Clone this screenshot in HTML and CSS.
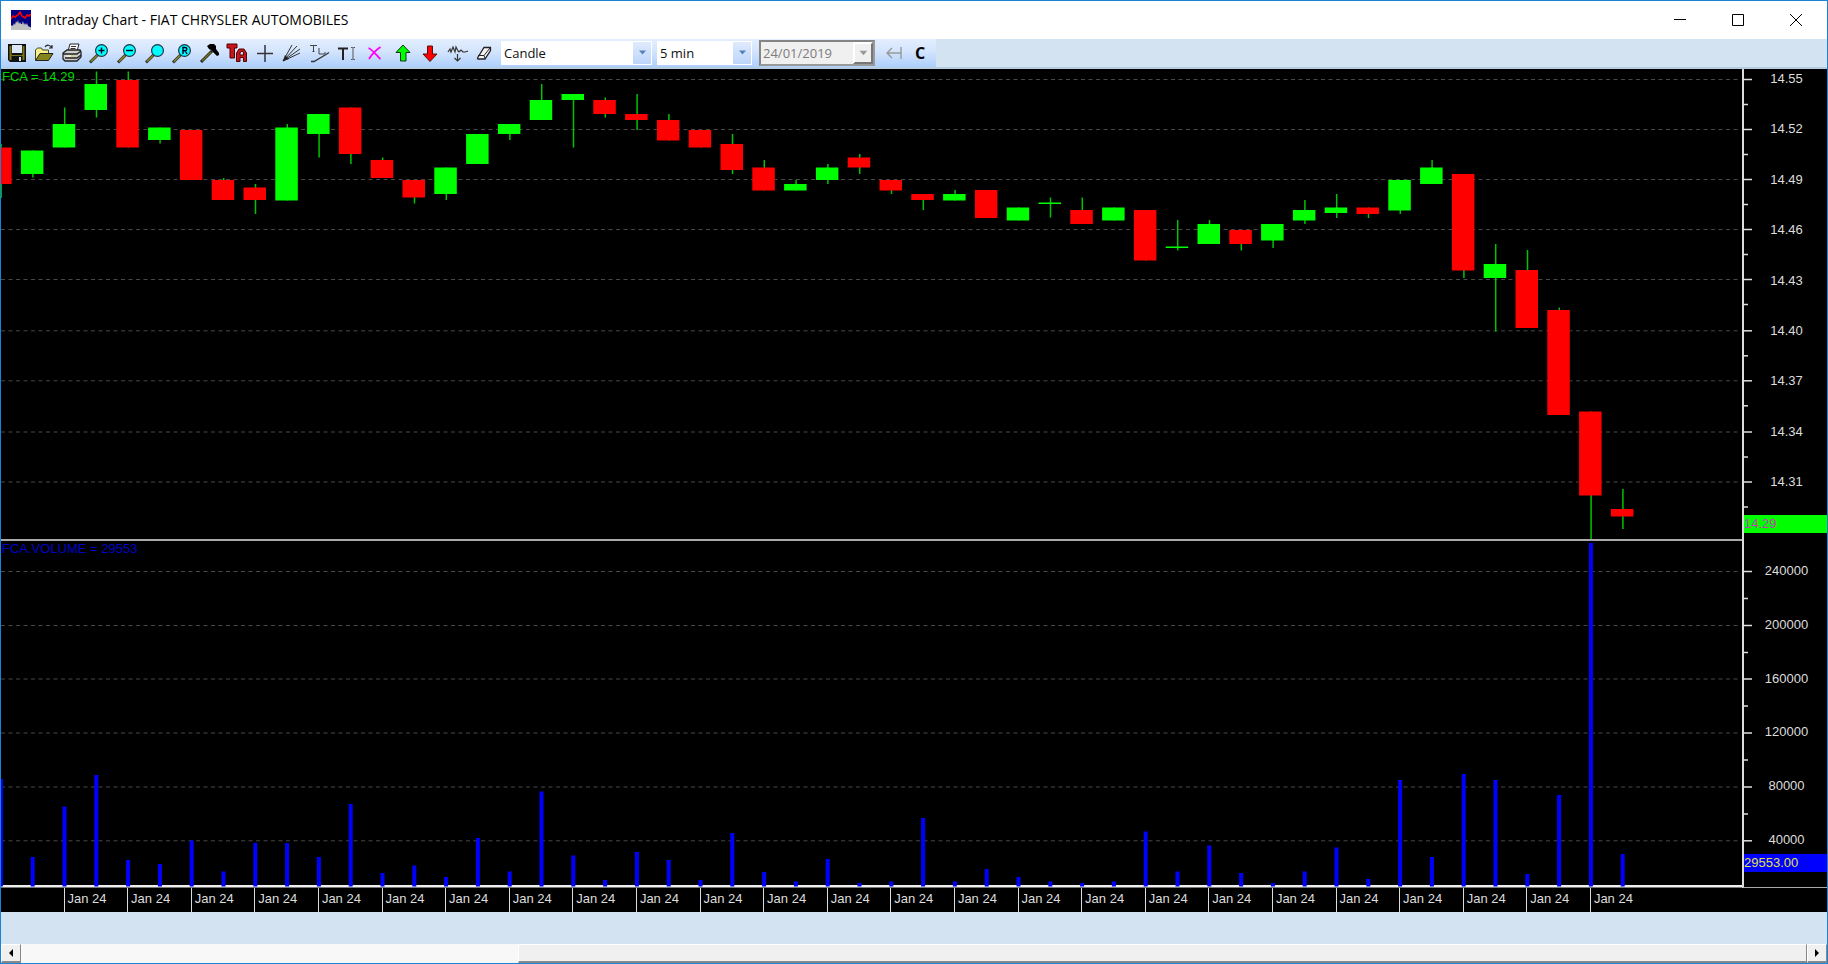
FILE: index.html
```html
<!DOCTYPE html>
<html lang="en">
<head>
<meta charset="utf-8">
<title>Intraday Chart - FIAT CHRYSLER AUTOMOBILES</title>
<link rel="stylesheet" href="styles.css">
</head>
<body>
<div class="window">
  <header class="titlebar">
    <svg class="app-icon" viewBox="0 0 20 20" aria-hidden="true">
      <rect width="20" height="20" fill="#000080"/>
      <path d="M0 20V16l1-1 1 1 1-3 1 2 1-4 1 2 1-3 1 4 1-2 1 2 1 0 1-3 1 4 1-2 1 2 1-2 1 3 2 1 2 1v3z" fill="#c0c0c0"/>
      <path d="M0 9l2-3 2 1 3-2 2-3 2 4 3 2 2-3 2 1 2-2" fill="none" stroke="#f00" stroke-width="1.6"/>
    </svg>
    <h1 class="title">Intraday Chart - FIAT CHRYSLER AUTOMOBILES</h1>
    <button class="win-btn" aria-label="Minimize"><svg viewBox="0 0 12 12"><path d="M0 5.500h12"/></svg></button>
    <button class="win-btn" aria-label="Maximize"><svg viewBox="0 0 12 12"><path d="M.5.5h11v11H.5z"/></svg></button>
    <button class="win-btn" aria-label="Close"><svg viewBox="0 0 12 12"><path d="M0 0l12 12M12 0L0 12"/></svg></button>
  </header>

  <div class="toolbar">
    <div class="tools">
      <div class="icons">
        <button aria-label="Save"><svg viewBox="0 0 20 20"><path d="M1 1h18v18H3l-2-2z" fill="#111"/><path d="M2.500 3h2v9h11V3h2v14h-2v-4h-11v4h-2z" fill="#77771a"/><path d="M5 2h10v8H5z" fill="#dce6f4"/><path d="M12 14h2v4h-2z" fill="#dce6f4"/></svg></button>
        <button aria-label="Open"><svg viewBox="0 0 20 20"><path d="M1.500 17V7l2-2h4l1 2h6v3" fill="#f5f08a" stroke="#444422"/><path d="M1.500 17.500L6 10.500h13l-4.500 7z" fill="#85851c" stroke="#222" /><path d="M11 4c2-3 5-2 7 1m0-3v3h-3" fill="none" stroke="#222" stroke-width="1.200"/></svg></button>
        <button aria-label="Print"><svg viewBox="0 0 20 20"><path d="M6 8l2-7h9l-2 7z" fill="#fff" stroke="#222"/><path d="M9 3.500h5M8.500 5.500h5" stroke="#333"/><path d="M1 10l4-3h13l1 2v5l-4 4H3l-2-2z" fill="#ccc" stroke="#222" stroke-width="1.300"/><path d="M1 11h14l4-3M3 15h12l4-3" fill="none" stroke="#222" stroke-width="1.300"/><path d="M4 13h8" stroke="#fff"/><path d="M9 13h3" stroke="#bb0"/></svg></button>
        <button aria-label="Zoom in"><svg viewBox="0 0 20 20"><use href="#lens"/><path d="M9.500 7.500h6M12.500 4.500v6" stroke="#002" stroke-width="1.400"/></svg></button>
        <button aria-label="Zoom out"><svg viewBox="0 0 20 20"><use href="#lens"/><path d="M9 7.500h7" stroke="#002" stroke-width="1.500"/></svg></button>
        <button aria-label="Zoom window"><svg viewBox="0 0 20 20"><use href="#lens"/></svg></button>
        <button aria-label="Reset zoom"><svg viewBox="0 0 20 20"><use href="#lens"/><path d="M11 11V4.500h2c2.500 0 2.500 3.200 0 3.200h-2m2 0l2 3.300" fill="none" stroke="#002" stroke-width="1.400"/></svg></button>
        <button aria-label="Settings"><svg viewBox="0 0 20 20"><path d="M1 19L12 8" stroke="#222" stroke-width="3"/><path d="M2 18L11 9" stroke="#77771a" stroke-width="1.500"/><path d="M7 3l3-2h4l2 2v3l3 4v2l-2 1-6-6-2-1z" fill="#000"/></svg></button>
        <button aria-label="Technical analysis"><svg viewBox="0 0 20 20"><path d="M0 1h10v4H7.500v10H3V5H0z" fill="#c4161c" stroke="#500"/><path d="M9.500 18.500V10l2.500-4h5l2.500 4v8.500h-3v-4h-3.500v4zm3.500-6.500h3.500v-2L16 8.500h-2L13 10z" fill="#c4161c" stroke="#500" fill-rule="evenodd"/></svg></button>
        <button aria-label="Crosshair"><svg viewBox="0 0 20 20"><path d="M2 10.500h16M10 2v17" stroke="#333" stroke-width="1.500"/></svg></button>
        <button aria-label="Fan lines"><svg viewBox="0 0 20 20"><path d="M1 18L10 2M1 18L15 3M1 18L18 6M1 18l17-8" stroke="#333" fill="none"/><path d="M1 18l2-6 4 4z" fill="#222"/></svg></button>
        <button aria-label="Trend line"><svg viewBox="0 0 20 20"><path d="M0 2.500h7M3.500 2.500v6M2.500 8.500h2M9 5v6h6V9" fill="none" stroke="#444"/><path d="M1 18.500h3l12-7 3-2" fill="none" stroke="#333" stroke-width="1.300"/></svg></button>
        <button aria-label="Text"><svg viewBox="0 0 20 20"><path d="M1 5.500h10M6 5v12" stroke="#222" stroke-width="2"/><path d="M14 4.500h1.500l.5.500.500-.500H18M14 16.500h1.500l.5-.500.500.500H18M16 5v11" stroke="#555" fill="none"/></svg></button>
        <button aria-label="Delete"><svg viewBox="0 0 20 20"><path d="M3.500 5c3 1 8 7 12 11M15.500 4C11 7 7 11 4 16" fill="none" stroke="#f0f" stroke-width="1.800"/></svg></button>
        <button aria-label="Up arrow"><svg viewBox="0 0 20 20"><path d="M10 2l7 7.500h-4V18H7.500V9.500H3z" fill="#0f0" stroke="#131"/></svg></button>
        <button aria-label="Down arrow"><svg viewBox="0 0 20 20"><path d="M7.500 3h5v8H17l-7 7.500L3 11h4.500z" fill="#f00" stroke="#511"/></svg></button>
        <button aria-label="Indicator"><svg viewBox="0 0 20 20"><path d="M0 9l2-3 1 3 2-5 2 5 1-5 2 4 1 1 2-2 2 2h2l3-1" fill="none" stroke="#333" stroke-width="1.200"/><path d="M9.500 11v7M6.500 15l3 3 3-3" fill="none" stroke="#333" stroke-width="1.200"/></svg></button>
        <button aria-label="Eraser"><svg viewBox="0 0 20 20"><path d="M2.500 15L9 4.500h6.500v3L10 16H3z" fill="#f4f4f4" stroke="#222" stroke-width="1.300"/><path d="M3 12.500h6L15 5M9 12.500l1 3" fill="none" stroke="#222"/></svg></button>
      </div>
      <span class="combo combo-style">
        <select aria-label="Chart style"><option>Candle</option></select>
        <svg viewBox="0 0 18 21" aria-hidden="true"><path d="M6 8h7l-3.500 4z"/></svg>
      </span>
      <span class="combo combo-interval">
        <select aria-label="Interval"><option>5 min</option></select>
        <svg viewBox="0 0 18 21" aria-hidden="true"><path d="M6 8h7l-3.500 4z"/></svg>
      </span>
      <span class="combo combo-date">
        <select aria-label="Date" disabled><option>24/01/2019</option></select>
        <svg viewBox="0 0 18 21" aria-hidden="true"><path d="M5 8h9l-4.500 5z"/></svg>
      </span>
      <button class="tool-back" aria-label="Back" disabled><svg viewBox="0 0 20 20"><path d="M3 10h14M8 5l-5 5 5 5M17 4v12" fill="none" stroke="#999" stroke-width="1.400"/></svg></button>
      <button class="tool-c">C</button>
    </div>
  </div>

  <main class="chart">
    <section class="plot plot-price">
      <svg id="price" viewBox="1 69 1741 470" preserveAspectRatio="none" role="img" aria-label="Price candles"></svg>
      <span class="legend legend-price">FCA = 14.29</span>
    </section>
    <div class="axis axis-price">
      <svg id="price-ticks" viewBox="0 69 8 472" preserveAspectRatio="none" aria-hidden="true"></svg>
      <ol class="labels"><li>14.55</li><li>14.52</li><li>14.49</li><li>14.46</li><li>14.43</li><li>14.40</li><li>14.37</li><li>14.34</li><li>14.31</li></ol>
      <span class="tag tag-price">14.29</span>
    </div>
    <section class="plot plot-volume">
      <svg id="volume" viewBox="1 541 1741 347" preserveAspectRatio="none" role="img" aria-label="Volume bars"></svg>
      <span class="legend legend-volume">FCA.VOLUME = 29553</span>
    </section>
    <div class="axis axis-volume">
      <svg id="volume-ticks" viewBox="0 541 8 346" preserveAspectRatio="none" aria-hidden="true"></svg>
      <ol class="labels"><li>240000</li><li>200000</li><li>160000</li><li>120000</li><li>80000</li><li>40000</li></ol>
      <span class="tag tag-volume">29553.00</span>
    </div>
    <div class="dates" id="dates"></div>
  </main>

  <footer class="footer">
    <div class="scrollbar">
      <button aria-label="Scroll left"><svg viewBox="0 0 8 8"><path d="M6 0v8L2 4z"/></svg></button>
      <div class="track"><div class="thumb"></div></div>
      <button aria-label="Scroll right"><svg viewBox="0 0 8 8"><path d="M2 0v8l4-4z"/></svg></button>
    </div>
  </footer>
</div>

<svg class="defs" aria-hidden="true">
  <g id="lens">
    <path d="M1 19.500L8.500 12" stroke="#333" stroke-width="3"/>
    <path d="M2 18.500L8 12.500" stroke="#8a8a20" stroke-width="1.600"/>
    <circle cx="12.500" cy="7.500" r="5.900" fill="#0ff" stroke="#234" stroke-width="1.200"/>
  </g>
</svg>
<script src="chart.js"></script>
</body>
</html>
```
FILE: styles.css
```css
* { box-sizing: border-box; }

body {
  margin: 0;
  font-family: "Liberation Sans", Arial, sans-serif;
  font-size: 13px;
}

button {
  margin: 0;
  padding: 0;
  border: 0;
  background: none;
  color: #000;
}

.defs { position: absolute; width: 0; height: 0; }

.window {
  display: flex;
  flex-direction: column;
  height: 100vh;
  border: 1px solid #1883d7;
  background: #d4e3f2;
}

/* Title bar */
.titlebar {
  display: flex;
  align-items: center;
  height: 38px;
  padding-left: 10px;
  background: #fff;
}
.app-icon { width: 20px; height: 20px; }
.title {
  flex: 1;
  margin: 0 0 0 13px;
  font: 400 14px/20px "Open Sans", "Noto Sans", sans-serif;
  color: #000;
}
.win-btn {
  display: flex;
  align-items: center;
  justify-content: center;
  width: 58px;
  height: 38px;
}
.win-btn:last-child { margin-right: 2px; }
.win-btn svg {
  width: 12px;
  height: 12px;
  fill: none;
  stroke: #000;
  overflow: visible;
}

/* Toolbar */
.toolbar {
  display: flex;
  height: 30px;
  border-bottom: 2px solid #b4cbe0;
}
.tools {
  display: flex;
  align-items: center;
  width: 935px;
  padding-left: 2px;
  background: linear-gradient(#e3eefe, #d3e4fd 45%, #aecffc);
}
.tools > * { flex-shrink: 0; }
.icons {
  display: grid;
  grid-template-columns: repeat(18, 1fr);
  width: 496px;
  margin-right: 2px;
}
.icons button,
.tool-back {
  display: flex;
  justify-content: center;
}
.icons svg,
.tool-back svg { width: 20px; height: 20px; overflow: visible; }

.combo {
  position: relative;
  height: 24px;
  margin-right: 5px;
}
.combo select {
  width: 100%;
  height: 24px;
  margin: 0;
  padding: 0 0 0 3px;
  border: 0;
  border-radius: 0;
  background: #fff;
  color: #111;
  font: 13px/24px "Open Sans", "Noto Sans", sans-serif;
  appearance: none;
}
.combo svg {
  position: absolute;
  top: 1px;
  right: 1px;
  width: 18px;
  height: 22px;
  background: linear-gradient(#dfeafd, #bdd5fb);
  fill: #5580b8;
  pointer-events: none;
}
.combo-style { width: 151px; }
.combo-interval { width: 95px; margin-right: 7px; }
.combo-date { width: 116px; height: 26px; margin-right: 9px; }
.combo-date select {
  height: 26px;
  border: 2px solid;
  border-color: #858585 #9a9a9a #9a9a9a #858585;
  padding-left: 2px;
  background: #f0f0f0;
  color: #7c7c7c;
  line-height: 22px;
  opacity: 1;
}
.combo-date svg {
  top: 2px;
  right: 2px;
  width: 20px;
  height: 22px;
  border: 2px solid;
  border-color: #fff #777 #777 #fff;
  background: #f0f0f0;
  fill: #999;
}
.tool-back { width: 20px; }
.tool-c {
  width: 32px;
  font: 700 16px/24px "Open Sans", "Noto Sans", sans-serif;
}

/* Chart */
.chart {
  display: grid;
  flex: 1;
  grid-template-columns: minmax(0, 1fr) 85px;
  grid-template-rows: minmax(0, 472fr) minmax(0, 347fr) 24px;
  background: #000;
  color: #ddd;
}
.plot { position: relative; }
.plot svg { display: block; width: 100%; height: 100%; overflow: hidden; }
.plot-price { border-bottom: 2px solid #aaa; }

.grid-line { stroke: #484848; stroke-dasharray: 4 3.5; }
.wick { stroke: #00c400; stroke-width: 1.5; }
.up { fill: #0f0; }
.down { fill: #f00; }
.bar { fill: #00f; }
.base { fill: #eee; }
.tick { stroke: #ddd; stroke-width: 1.5; }

.legend {
  position: absolute;
  left: 1px;
  line-height: 16px;
}
.legend-price { top: 0; color: #00d800; }
.legend-volume { top: 0; color: #0000c8; }

.axis {
  position: relative;
  display: flex;
  border-left: 2px solid #ddd;
}
.axis svg { width: 8px; height: 100%; }
.axis-volume { border-bottom: 1px solid #aaa; }
.labels {
  display: flex;
  flex: 1;
  flex-direction: column;
  justify-content: space-between;
  margin: 0;
  list-style: none;
  line-height: 16px;
  text-align: center;
}
.axis-price .labels { padding: 2px 6px 51px 0; }
.axis-volume .labels { padding: 22px 6px 39px 0; }
.tag {
  position: absolute;
  left: 0;
  right: 0;
  height: 18px;
  line-height: 18px;
}
.tag-price { bottom: 8px; background: #0f0; color: #c040b0; }
.tag-volume { bottom: 15px; background: #00f; color: #e0e040; }

.dates {
  display: grid;
  grid-template-columns: 625fr repeat(25, minmax(0, 636fr)) 885fr;
}
.date {
  padding-left: 3px;
  border-left: 1px solid #ddd;
  line-height: 22px;
  white-space: nowrap;
}
.date:first-child { grid-column-start: 2; }

/* Scroll bar */
.footer {
  padding-top: 32px;
}
.scrollbar {
  display: flex;
  height: 19px;
  background: #f0f0f0;
}
.scrollbar button {
  display: flex;
  align-items: center;
  justify-content: center;
  width: 20px;
  border: 1px solid;
  border-color: #fff #888 #888 #fff;
  border-bottom-width: 2px;
  background: #f0f0f0;
}
.scrollbar svg { width: 8px; height: 8px; }
.track {
  display: flex;
  flex: 1;
  justify-content: flex-end;
  background: #f8f8f8;
}
.thumb {
  width: 72.2%;
  border: 1px solid;
  border-color: #fff #888 #888 #fff;
  border-bottom-width: 2px;
  background: #f0f0f0;
}
```
FILE: chart.js
```js
const NS = "http://www.w3.org/2000/svg";
const STEP = 31.8;
const ORIGIN = 0.6;

// Each candle: direction, high, body top, body bottom, low
const candles = [
  ["r",144,147.5,184,198],["g",150.5,150.5,174,177.5],["g",107.5,124,147.5,147.5],["g",71.5,84,110,117.5],
  ["r",71.5,80,147.5,147.5],["g",127.5,127.5,140,143.5],["r",130,130,180,180],["r",178,180,200,200],
  ["r",184,187.5,200,214],["g",124,127.5,200.5,200.5],["g",114,114,134,157.5],["r",107.5,107.5,154,164],
  ["r",157.5,160,178,178],["r",180,180,197.5,203.5],["g",167.5,167.5,194,200],["g",134,134,164,164],
  ["g",124,124,134,140],["g",84,100,120,120],["g",94,94,100,147.5],["r",97.5,100,114,117.5],
  ["r",94,114,120,130],["r",114,120,140.5,140.5],["r",130,130,147.5,147.5],["r",134,144,170,174],
  ["r",160,167.5,190.5,190.5],["g",180,184,190.5,190.5],["g",164,167.5,180,184],["r",154,157.5,167.5,174],
  ["r",180,180,190.5,194],["r",194,194,200,210],["g",190,194,200.5,200.5],["r",190,190,218,218],
  ["g",207.5,207.5,220.5,220.5],["g",197.5,202.5,204,217.5],["r",197.5,210,224,224],["g",207.5,207.5,220.5,220.5],
  ["r",210,210,260.5,260.5],["g",220,246.5,248,250.5],["g",220,224,244,244],["r",230,230,244,250.5],
  ["g",224,224,240.5,248],["g",200,210,220.5,224],["g",194,207.5,213,218],["r",207.5,207.5,214,218],
  ["g",180,180,210.5,214],["g",160,167.5,184,184],["r",174,174,270.5,278],["g",244,264,278,331.5],
  ["r",250,270,328,328],["r",307.5,310,415,415],["r",411.5,411.5,495.5,539],["r",489,509,516.5,529]
];

const volumeTops = [
  779,857,806.5,775,860,864,840.5,871.5,843,843,857,804,873,865.5,877,838,871.5,791.5,855.5,880,852,860,880,833,
  872,881.5,859,883,881.5,818,881.5,869,877,881.5,883,881.5,831.5,871.5,845.5,873,883,871.5,847.5,879,780,857,774,
  780,874,795,543,854
];

const priceLines = [79.5,129.5,179.5,229.5,279.5,330.8,380.8,432,482];
const volumeLines = [571.5,625.5,679,733,787,840.8];

function add(parent, name, attrs) {
  const el = document.createElementNS(NS, name);
  for (const key in attrs) el.setAttribute(key, attrs[key]);
  parent.appendChild(el);
}

function gridLines(svg, lines) {
  lines.forEach(y => add(svg, "line", { class: "grid-line", x1: 1, x2: 1739, y1: y, y2: y }));
}

function ticks(svg, lines, gap) {
  lines.forEach(y => {
    add(svg, "line", { class: "tick", x1: 0, x2: 8, y1: y, y2: y });
    add(svg, "line", { class: "tick", x1: 0, x2: 4, y1: y + gap, y2: y + gap });
  });
}

const price = document.getElementById("price");
gridLines(price, priceLines);
candles.forEach(([dir, high, top, bottom, low], i) => {
  const x = ORIGIN + STEP * i;
  add(price, "line", { class: "wick", x1: x + 0.5, x2: x + 0.5, y1: high, y2: low });
  add(price, "rect", { class: dir === "g" ? "up" : "down", x: x - 11.5, width: 22.5, y: top, height: bottom - top });
});

const volume = document.getElementById("volume");
gridLines(volume, volumeLines);
add(volume, "rect", { class: "base", x: 1, width: 1741, y: 885, height: 2.5 });
volumeTops.forEach((y, i) => {
  add(volume, "rect", { class: "bar", x: ORIGIN + STEP * i - 1.7, width: 4, y: y, height: 886.5 - y });
});

ticks(document.getElementById("price-ticks"), priceLines, 25);
ticks(document.getElementById("volume-ticks"), volumeLines, 27);

const dates = document.getElementById("dates");
for (let i = 0; i < 25; i++) {
  const cell = document.createElement("span");
  cell.className = "date";
  cell.textContent = "Jan 24";
  dates.appendChild(cell);
}
```
